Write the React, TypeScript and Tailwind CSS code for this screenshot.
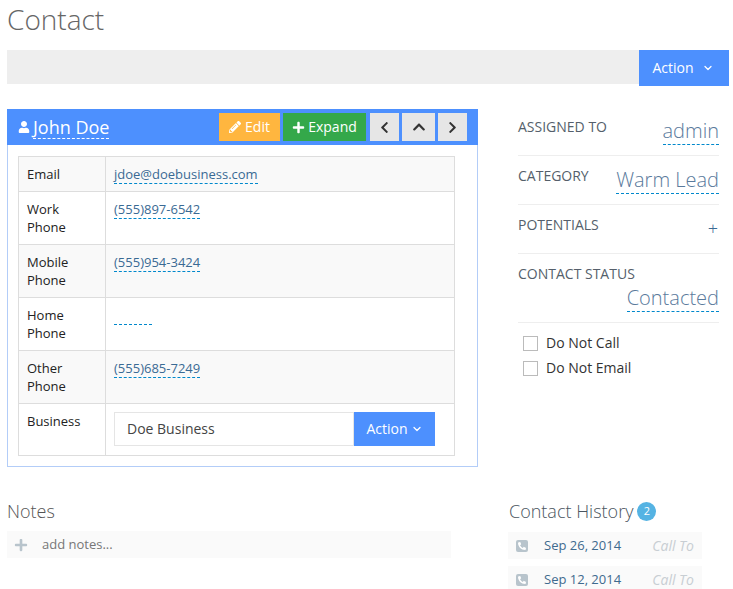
import { ChevronDown } from 'lucide-react';
import { FaChevronLeft, FaChevronRight, FaChevronUp, FaPencilAlt, FaPhone, FaPlus, FaUser } from 'react-icons/fa';

const font = "font-['Open_Sans',sans-serif]";

function Editable({ children, className = '' }: { children: React.ReactNode; className?: string }) {
  return <span className={`inline-block border-b border-dashed border-[#0088cc] leading-[18px] text-[#3a6a94] ${className}`}>{children}</span>;
}

function PhoneRow({ label, value, striped }: { label: string; value?: string; striped?: boolean }) {
  return (
    <div className={`flex h-[53px] border-b border-[#dddddd] ${striped ? 'bg-[#f9f9f9]' : 'bg-white'}`}>
      <div className="w-[87px] shrink-0 border-r border-[#dddddd] pl-[8px] pt-[8px] text-[13px] leading-[18px] text-[#222]">
        {label.split(' ').map((w) => (
          <div key={w}>{w}</div>
        ))}
      </div>
      <div className="pl-[8px] pt-[8px] text-[13px]">
        {value ? <Editable>{value}</Editable> : <span className="block h-[19px] w-[38px] border-b border-dashed border-[#0088cc]" />}
      </div>
    </div>
  );
}

function SideRow({ label, value, h, first, stacked }: { label: string; value: string; h: string; first?: boolean; stacked?: boolean }) {
  return (
    <div className={`border-b border-[#eeeeee] ${h} ${stacked ? '' : 'flex justify-between'}`}>
      <div className={`${first ? 'pt-[9px]' : 'pt-[11px]'} text-[14px] leading-[18px] text-[#555f6b]`}>{label}</div>
      <div className={`flex justify-end text-[20px] font-light leading-none ${stacked ? 'mt-[2px]' : first ? 'pt-[9px]' : 'pt-[11px]'}`}>
        <Editable className="self-start !leading-[26px] !text-[#5a7a9c]">{value}</Editable>
      </div>
    </div>
  );
}

function HistoryRow({ date }: { date: string }) {
  return (
    <div className="flex h-[27px] w-[194px] items-center bg-[#fafafa] pl-[8px] pr-[8px]">
      <span className="flex h-[12px] w-[12px] items-center justify-center rounded-[2px] bg-[#b8c4cc]">
        <FaPhone className="h-[8px] w-[8px] scale-x-[-1] text-white" />
      </span>
      <span className="ml-[16px] text-[13px] text-[#3f6a8e]">{date}</span>
      <span className="ml-auto text-[14px] italic text-[#c8ced3]">Call To</span>
    </div>
  );
}

export default function App() {
  return (
    <div className={`${font} h-[589px] w-[733px] overflow-hidden bg-white pl-[7px] pr-[4px]`}>
      <h1 className="h-[50px] text-[28px] font-light leading-[38px] text-[#666]">Contact</h1>
      <div className="flex h-[34px] items-start justify-end bg-[#eeeeee]">
        <button className="flex h-[36px] w-[90px] items-center justify-center gap-[8px] bg-[#4d90fe] pb-[1px] pr-[2px] text-[14px] text-white">
          Action <ChevronDown className="h-[12px] w-[12px]" strokeWidth={2.5} />
        </button>
      </div>

      <div className="mt-[25px] flex">
        <div className="h-[358px] w-[471px] shrink-0 border border-[#b3cdf8]">
          <div className="-ml-px -mr-px -mt-px flex h-[36px] items-center bg-[#4d90fe] pl-[11px] pr-[11px]">
            <FaUser className="h-[12px] w-[12px] text-white" />
            <span className="ml-[3px] border-b border-dashed border-white text-[18px] leading-[22px] text-white">John Doe</span>
            <button className="ml-auto flex h-[28px] w-[61px] items-center justify-center gap-[4px] bg-[#ffb63f] pb-[2px] text-[14px] text-white">
              <FaPencilAlt className="mt-[2px] h-[12px] w-[12px]" /> Edit
            </button>
            <button className="ml-[3px] flex h-[28px] w-[83px] items-center justify-center gap-[3px] bg-[#34a84a] pb-[2px] text-[14px] text-white">
              <FaPlus className="mt-[2px] h-[13px] w-[13px]" /> Expand
            </button>
            <button className="ml-[4px] flex h-[28px] w-[29px] items-center justify-center bg-[#e6e6e6] text-[#333]">
              <FaChevronLeft className="h-[13px] w-[13px]" />
            </button>
            <button className="ml-[3px] flex h-[28px] w-[33px] items-center justify-center bg-[#e6e6e6] text-[#333]">
              <FaChevronUp className="h-[14px] w-[14px]" />
            </button>
            <button className="ml-[3px] flex h-[28px] w-[29px] items-center justify-center bg-[#e6e6e6] text-[#333]">
              <FaChevronRight className="h-[13px] w-[13px]" />
            </button>
          </div>

          <div className="ml-[10px] mt-[11px] w-[437px] border border-b-0 border-[#dddddd]">
            <div className="flex h-[35px] items-stretch border-b border-[#dddddd] bg-[#f9f9f9]">
              <div className="flex w-[87px] shrink-0 items-center border-r border-[#dddddd] pl-[8px] pt-[1px] text-[13px] text-[#222]">Email</div>
              <div className="flex items-center pl-[8px] text-[13px]"><Editable>jdoe@doebusiness.com</Editable></div>
            </div>
            <PhoneRow label="Work Phone" value="(555)897-6542" />
            <PhoneRow label="Mobile Phone" value="(555)954-3424" striped />
            <PhoneRow label="Home Phone" />
            <PhoneRow label="Other Phone" value="(555)685-7249" striped />
            <div className="flex h-[52px] border-b border-[#dddddd]">
              <div className="w-[87px] shrink-0 border-r border-[#dddddd] pl-[8px] pt-[8px] text-[13px] leading-[18px] text-[#222]">Business</div>
              <div className="flex pl-[8px] pt-[8px]">
                <div className="flex h-[34px] w-[240px] items-center border border-[#e5e5e5] pb-[2px] pl-[12px] text-[14px] text-[#444]">Doe Business</div>
                <button className="flex h-[34px] w-[81px] items-center justify-center gap-[3px] bg-[#4d90fe] pb-[2px] text-[14px] text-white">
                  Action <ChevronDown className="mt-[2px] h-[12px] w-[12px]" strokeWidth={2.5} />
                </button>
              </div>
            </div>
          </div>
        </div>

        <div className="ml-[40px] w-[201px]">
          <SideRow label="ASSIGNED TO" value="admin" h="h-[47px]" first />
          <SideRow label="CATEGORY" value="Warm Lead" h="h-[49px]" />
          <div className="flex h-[49px] justify-between border-b border-[#eeeeee]">
            <div className="pt-[11px] text-[14px] leading-[18px] text-[#555f6b]">POTENTIALS</div>
            <div className="pr-[1px] pt-[11px] text-[18px] font-light leading-[24px] text-[#3a6a94]">+</div>
          </div>
          <SideRow label="CONTACT STATUS" value="Contacted" h="h-[69px]" stacked />
          <label className="ml-[5px] mt-[8px] flex h-[25px] items-center gap-[8px] text-[14px] text-[#333]">
            <span className="h-[15px] w-[15px] border border-[#bbbbbb] bg-white" />
            <span className="mb-[2px]">Do Not Call</span>
          </label>
          <label className="ml-[5px] flex h-[25px] items-center gap-[8px] text-[14px] text-[#333]">
            <span className="h-[15px] w-[15px] border border-[#bbbbbb] bg-white" />
            <span className="mb-[2px]">Do Not Email</span>
          </label>
        </div>
      </div>

      <div className="mt-[31px] flex">
        <div className="w-[444px] shrink-0">
          <h3 className="text-[18px] font-light leading-[26px] text-[#555]">Notes</h3>
          <div className="mt-[7px] flex h-[27px] items-center bg-[#fafafa] pl-[7px] text-[13px] text-[#777]">
            <FaPlus className="h-[14px] w-[14px] text-[#b8c4cc]" />
            <span className="ml-[14px]">add notes...</span>
          </div>
        </div>
        <div className="ml-[58px]">
          <h3 className="flex items-center text-[18px] font-light leading-[26px] text-[#4a5560]">
            Contact History
            <span className="ml-[4px] flex h-[19px] w-[19px] items-center justify-center rounded-full bg-[#55b3e3] text-[11px] font-normal text-white">2</span>
          </h3>
          <div className="-ml-px mt-[8px] flex flex-col gap-[7px]">
            <HistoryRow date="Sep 26, 2014" />
            <HistoryRow date="Sep 12, 2014" />
          </div>
        </div>
      </div>
    </div>
  );
}
